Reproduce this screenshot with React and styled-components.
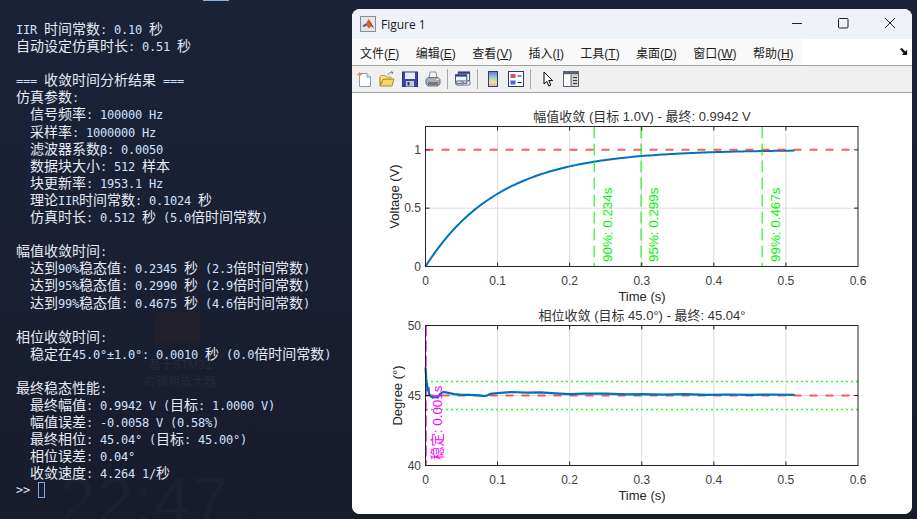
import React from 'react';
import styled, { createGlobalStyle } from 'styled-components';

const sansFont = '"Liberation Sans", "Noto Sans CJK SC", sans-serif';
const monoFont = '"DejaVu Sans Mono", "Noto Sans CJK SC", monospace';
const axisColor = '#262626';

const GlobalStyle = createGlobalStyle`
  html, body {
    margin: 0;
    padding: 0;
    background: #1a1f30;
  }
`;

const Desktop = styled.div`
  position: relative;
  display: flex;
  width: 917px;
  height: 519px;
  overflow: hidden;
  background: linear-gradient(180deg, #1b2236 0%, #1a2032 50%, #181b2a 100%);
`;

const TaskAccent = styled.div`
  position: absolute;
  top: 0;
  left: 203px;
  width: 26px;
  height: 1px;
  background: #7fb0f0;
`;

const WallpaperTile = styled.div`
  position: absolute;
  left: 155px;
  top: 313px;
  width: 45px;
  height: 30px;
  background: #22212b;
`;

const WallpaperCaption = styled.div`
  position: absolute;
  left: 143px;
  top: 357px;
  width: 74px;
  font-family: ${sansFont};
  font-size: 12px;
  line-height: 17px;
  text-align: center;
  color: #262a3a;
`;

const WallpaperClock = styled.div`
  position: absolute;
  left: 59px;
  top: 463px;
  font-family: ${sansFont};
  font-size: 66px;
  letter-spacing: 1px;
  line-height: 76px;
  color: #1c2031;
`;

const Terminal = styled.div`
  position: relative;
  flex: 0 0 352px;
  box-sizing: border-box;
  padding: 20px 0 0 16px;
  font-family: ${monoFont};
  font-size: 12px;
  letter-spacing: -0.22px;
  color: #cfe0ff;
`;

const Line = styled.div`
  height: 17.1px;
  line-height: 17.1px;
  white-space: pre;
`;

const Han = styled.span`
  font-family: "Noto Sans CJK SC", sans-serif;
  font-size: 14px;
  letter-spacing: 0;
  color: #e6eaf4;
`;

const Caret = styled.span`
  display: inline-block;
  box-sizing: border-box;
  width: 7px;
  height: 16px;
  margin-left: 1px;
  vertical-align: -4px;
  border: 1px solid #7fa8e8;
`;

const Figure = styled.div`
  flex: 0 0 560px;
  display: flex;
  flex-direction: column;
  height: 505px;
  margin-top: 9px;
  overflow: hidden;
  border-radius: 8px;
  background: #fff;
`;

const TitleBar = styled.div`
  flex: 0 0 30px;
  display: flex;
  align-items: center;
  padding-left: 8px;
  background: #eff2f9;
`;

const AppIcon = styled.svg`
  width: 16px;
  height: 16px;
  margin-right: 5px;
`;

const WindowTitle = styled.div`
  flex: 1;
  font-family: "Open Sans", sans-serif;
  font-size: 12px;
  color: #1a1a1a;
`;

const WindowButton = styled.svg`
  width: 46px;
  height: 30px;
`;

const MenuBar = styled.div`
  flex: 0 0 27px;
  display: flex;
  box-sizing: border-box;
  border-bottom: 1px solid #a0a0a0;
  background: #fff;
`;

const MenuItems = styled.div`
  display: flex;
  align-items: center;
  gap: 16.4px;
  width: 450px;
  box-sizing: border-box;
  padding-left: 8px;
  background: #f9f9f9;
`;

const MenuItem = styled.span`
  font-family: ${sansFont};
  font-size: 12px;
  color: #1c1c1c;
  white-space: nowrap;

  u {
    text-underline-offset: 1px;
  }
`;

const DockArrow = styled.svg`
  width: 8px;
  height: 8px;
  margin: 9px 4px 0 auto;
`;

const Toolbar = styled.div`
  flex: 0 0 27px;
  display: flex;
  align-items: center;
  box-sizing: border-box;
  border-bottom: 1px solid #a0a0a0;
  background: #f0f0f0;
`;

const ToolButton = styled.div`
  display: flex;
  justify-content: center;
  width: 23px;
`;

const ToolIcon = styled.svg`
  display: block;
  width: 16px;
  height: 16px;
`;

const ToolSep = styled.div`
  width: 1px;
  height: 20px;
  margin: 0 ${p => p.$right || 3}px 0 3px;
  background: #a6a6a6;
`;

const Canvas = styled.div`
  flex: 1;
  display: flex;
  flex-direction: column;
  padding-top: 10px;
  background: #fff;
`;

const PlotSvg = styled.svg`
  display: block;
  width: 560px;
  flex: none;
`;

const TickLabel = styled.text`
  font-family: ${sansFont};
  font-size: 12px;
  fill: #404040;
`;

const AxisLabel = styled.text`
  font-family: ${sansFont};
  font-size: 13px;
  fill: #262626;
  text-anchor: middle;
`;

const PlotTitle = styled.text`
  font-family: ${sansFont};
  font-size: 13px;
  fill: #333;
  text-anchor: middle;
`;

const Note = styled.text`
  font-family: ${sansFont};
  font-size: 13.4px;
  fill: ${p => p.$color};
`;

const LINES = [
  'IIR 时间常数: 0.10 秒',
  '自动设定仿真时长: 0.51 秒',
  '',
  '=== 收敛时间分析结果 ===',
  '仿真参数:',
  '  信号频率: 100000 Hz',
  '  采样率: 1000000 Hz',
  '  滤波器系数β: 0.0050',
  '  数据块大小: 512 样本',
  '  块更新率: 1953.1 Hz',
  '  理论IIR时间常数: 0.1024 秒',
  '  仿真时长: 0.512 秒 (5.0倍时间常数)',
  '',
  '幅值收敛时间:',
  '  达到90%稳态值: 0.2345 秒 (2.3倍时间常数)',
  '  达到95%稳态值: 0.2990 秒 (2.9倍时间常数)',
  '  达到99%稳态值: 0.4675 秒 (4.6倍时间常数)',
  '',
  '相位收敛时间:',
  '  稳定在45.0°±1.0°: 0.0010 秒 (0.0倍时间常数)',
  '',
  '最终稳态性能:',
  '  最终幅值: 0.9942 V (目标: 1.0000 V)',
  '  幅值误差: -0.0058 V (0.58%)',
  '  最终相位: 45.04° (目标: 45.00°)',
  '  相位误差: 0.04°',
  '  收敛速度: 4.264 1/秒',
];

const MENUS = [
  ['文件', 'F'],
  ['编辑', 'E'],
  ['查看', 'V'],
  ['插入', 'I'],
  ['工具', 'T'],
  ['桌面', 'D'],
  ['窗口', 'W'],
  ['帮助', 'H'],
];

const renderLine = text =>
  text.split(/([\u3000-\u9fff]+)/).map((part, i) =>
    i % 2 ? <Han key={i}>{part}</Han> : part
  );

// plot area in page coordinates
const LEFT = 425.5;
const RIGHT = 858;
const xPos = t => LEFT + (t / 0.6) * (RIGHT - LEFT);
const XTICKS = [0, 0.1, 0.2, 0.3, 0.4, 0.5, 0.6];

function toPoints(data, yPos) {
  return data.map(([t, v]) => `${xPos(t).toFixed(2)},${yPos(v).toFixed(2)}`).join(' ');
}

function Axes({ top, bottom, yTicks, yPos, yName, yNameX, title, children }) {
  const midY = (top + bottom) / 2;
  return (
    <>
      {XTICKS.slice(1, -1).map(t => (
        <line key={t} x1={xPos(t)} x2={xPos(t)} y1={top} y2={bottom} stroke="#dcdcdc" />
      ))}
      {yTicks.slice(1, -1).map(v => (
        <line key={v} x1={LEFT} x2={RIGHT} y1={yPos(v)} y2={yPos(v)} stroke="#dcdcdc" />
      ))}
      {children}
      <rect x={LEFT} y={top} width={RIGHT - LEFT} height={bottom - top} fill="none" stroke={axisColor} />
      {XTICKS.slice(1, -1).map(t => (
        <React.Fragment key={t}>
          <line x1={xPos(t)} x2={xPos(t)} y1={top} y2={top + 4} stroke={axisColor} />
          <line x1={xPos(t)} x2={xPos(t)} y1={bottom} y2={bottom - 4} stroke={axisColor} />
        </React.Fragment>
      ))}
      {yTicks.map(v => (
        <React.Fragment key={v}>
          <line x1={LEFT} x2={LEFT + 4} y1={yPos(v)} y2={yPos(v)} stroke={axisColor} />
          <line x1={RIGHT} x2={RIGHT - 4} y1={yPos(v)} y2={yPos(v)} stroke={axisColor} />
          <TickLabel x={421} y={yPos(v) + 4} textAnchor="end">{v}</TickLabel>
        </React.Fragment>
      ))}
      {XTICKS.map(t => (
        <TickLabel key={t} x={xPos(t)} y={bottom + 18} textAnchor="middle">{t}</TickLabel>
      ))}
      <AxisLabel x={642} y={bottom + 34}>Time (s)</AxisLabel>
      <AxisLabel transform={`translate(${yNameX} ${midY}) rotate(-90)`}>{yName}</AxisLabel>
      <PlotTitle x={642} y={top - 6}>{title}</PlotTitle>
    </>
  );
}

function AmplitudePlot() {
  const top = 126.5;
  const bottom = 266.5;
  const yPos = v => bottom - (v / 1.2) * (bottom - top);
  const curve = [];
  for (let t = 0; t <= 0.508; t += 0.004) curve.push([t, 1 - Math.exp(-t / 0.1024)]);
  curve.push([0.512, 0.9942]);
  const marks = [
    [0.234, '90%: 0.234s', 612],
    [0.299, '95%: 0.299s', 658],
    [0.467, '99%: 0.467s', 780],
  ];
  return (
    <PlotSvg viewBox="352 103 560 203" height="203">
      <Axes
        top={top}
        bottom={bottom}
        yPos={yPos}
        yTicks={[0, 0.5, 1]}
        yName="Voltage (V)"
        yNameX={399}
        title="幅值收敛 (目标 1.0V) - 最终: 0.9942 V"
      >
        <polyline points={toPoints(curve, yPos)} fill="none" stroke="#0072bd" strokeWidth="2" />
        <line x1={LEFT} x2={RIGHT} y1={yPos(1)} y2={yPos(1)} stroke="#ff3030" strokeOpacity="0.8" strokeWidth="2" strokeDasharray="8 8" />
        {marks.map(([t, label, textX]) => (
          <React.Fragment key={label}>
            <line x1={xPos(t)} x2={xPos(t)} y1={top} y2={bottom} stroke="#00f000" strokeDasharray="12 5" />
            <Note $color="#00f400" transform={`translate(${textX} 262) rotate(-90)`}>{label}</Note>
          </React.Fragment>
        ))}
      </Axes>
    </PlotSvg>
  );
}

function PhasePlot() {
  const top = 325.5;
  const bottom = 465.5;
  const yPos = v => bottom - ((v - 40) / 10) * (bottom - top);
  const curve = [
    [0, 47], [0.0008, 46.4], [0.0015, 45.6], [0.002, 45.9], [0.003, 45.3], [0.004, 45.6], [0.005, 45.1], [0.007, 44.95],
    [0.01, 44.85], [0.013, 44.9], [0.017, 44.85], [0.02, 45.1], [0.025, 45.25], [0.03, 45.2], [0.04, 45.1], [0.05, 45.05],
    [0.06, 45.05], [0.07, 45.03], [0.08, 44.97], [0.085, 44.98], [0.09, 45.12], [0.1, 45.17], [0.12, 45.25], [0.14, 45.2],
    [0.16, 45.22], [0.18, 45.15], [0.2, 45.1], [0.22, 45.13], [0.25, 45.14], [0.28, 45.08], [0.3, 45.1], [0.33, 45.06],
    [0.36, 45.1], [0.39, 45.05], [0.42, 45.07], [0.45, 45.04], [0.48, 45.07], [0.512, 45.04],
  ];
  return (
    <PlotSvg viewBox="352 306 560 198" height="198">
      <Axes
        top={top}
        bottom={bottom}
        yPos={yPos}
        yTicks={[40, 45, 50]}
        yName="Degree (°)"
        yNameX={402}
        title="相位收敛 (目标 45.0°) - 最终: 45.04°"
      >
        {[44, 46].map(v => (
          <line key={v} x1={426} x2={RIGHT} y1={yPos(v)} y2={yPos(v)} stroke="#20ff20" strokeWidth="1.5" strokeDasharray="2 3" />
        ))}
        <line x1={xPos(0.001)} x2={xPos(0.001)} y1={top} y2={bottom} stroke="#ff00ff" strokeDasharray="11 4" />
        <line x1={LEFT} x2={RIGHT} y1={yPos(45)} y2={yPos(45)} stroke="#ff3030" strokeOpacity="0.8" strokeWidth="2" strokeDasharray="8 8" />
        <polyline points={toPoints(curve, yPos)} fill="none" stroke="#0072bd" strokeWidth="2.2" />
        <Note $color="#ff00ff" transform="translate(442 460) rotate(-90)">稳定: 0.001s</Note>
      </Axes>
    </PlotSvg>
  );
}

const MatlabIcon = () => (
  <AppIcon viewBox="0 0 16 16">
    <rect x="0.5" y="0.5" width="15" height="15" fill="#e4e6ea" stroke="#8a8d96" />
    <path d="M2 10 L6 7.5 L8.5 3 L11 7 L14 12 L11 10.5 L9 12.5 L6.5 9.5 Z" fill="#d9622b" />
    <path d="M2 10 L6 7.5 L7 8.5 L5 11 Z" fill="#2f6fb0" />
    <path d="M8.5 3 L11 7 L14 12 L11.5 10 L9.5 6 Z" fill="#b03a1a" />
  </AppIcon>
);

const NewIcon = () => (
  <ToolIcon viewBox="0 0 16 16">
    <path d="M3.5 2.5 H11 L14.5 6 V15.5 H3.5 Z" fill="#fbfdff" stroke="#7d9cc0" />
    <path d="M11 2.5 V6 H14.5" fill="#dfe9f5" stroke="#7d9cc0" />
    <path d="M3.5 0.5 L4.3 2.5 L6.5 3.5 L4.3 4.5 L3.5 6.5 L2.7 4.5 L0.5 3.5 L2.7 2.5 Z" fill="#f08a3c" />
  </ToolIcon>
);

const OpenIcon = () => (
  <ToolIcon viewBox="0 0 16 16">
    <path d="M1 6 V15 H13 L15 8 H4 L2.5 13" fill="#f6d75f" stroke="#a88a2a" />
    <path d="M1 6 L2 4.5 H6 L7 6 H12 V8 H4 L1.5 14 Z" fill="#fbe68c" stroke="#a88a2a" strokeWidth="0.8" />
    <path d="M9 4 C10 1.5 12 1 14 1.5 M14 1.5 L12 0.5 M14 1.5 L12.6 3.2" fill="none" stroke="#6f7f8f" />
  </ToolIcon>
);

const SaveIcon = () => (
  <ToolIcon viewBox="0 0 16 16">
    <rect x="0.5" y="1" width="15" height="15" fill="#3d43a8" stroke="#2a2e80" />
    <rect x="3" y="1.5" width="10" height="6.5" fill="#e8ecf8" />
    <rect x="4" y="10" width="8" height="5.5" fill="#c8ccd8" />
    <rect x="5.5" y="11" width="2" height="3.5" fill="#2a2e60" />
  </ToolIcon>
);

const PrintIcon = () => (
  <ToolIcon viewBox="0 0 16 16">
    <path d="M4 7 L5 1 H11 L12 7 Z" fill="#f4f6f8" stroke="#8a9098" />
    <path d="M1 8.5 L3 6.5 H13 L15 8.5 V13 L13 15 H3 L1 13 Z" fill="#a9aeb4" stroke="#6c7278" />
    <rect x="3" y="11" width="10" height="3" fill="#71767c" />
    <rect x="11.5" y="8" width="2" height="1" fill="#f2f2f2" />
  </ToolIcon>
);

const LinkIcon = () => (
  <ToolIcon viewBox="0 0 17 16">
    <rect x="3.5" y="0.5" width="12" height="9" fill="#f1f4f8" stroke="#32457a" />
    <rect x="3.5" y="0.5" width="12" height="2" fill="#32457a" />
    <rect x="0.5" y="3.5" width="12" height="9" fill="#f1f4f8" stroke="#32457a" />
    <rect x="0.5" y="3.5" width="12" height="2" fill="#32457a" />
    <rect x="1" y="10" width="8" height="4.5" rx="2.2" fill="none" stroke="#77818f" strokeWidth="1.5" />
    <rect x="7" y="10" width="9" height="4.5" rx="2.2" fill="none" stroke="#8d97a5" strokeWidth="1.5" />
  </ToolIcon>
);

const ColorbarIcon = () => (
  <ToolIcon viewBox="0 0 16 16">
    <defs>
      <linearGradient id="colorbarFill" x1="0" y1="0" x2="0" y2="1">
        <stop offset="0" stopColor="#5a78c8" />
        <stop offset="0.4" stopColor="#9fd0c8" />
        <stop offset="0.7" stopColor="#e6e6a0" />
        <stop offset="1" stopColor="#e6a8c0" />
      </linearGradient>
    </defs>
    <rect x="3.5" y="0.5" width="9" height="15" fill="url(#colorbarFill)" stroke="#2f3d66" />
  </ToolIcon>
);

const LegendIcon = () => (
  <ToolIcon viewBox="0 0 16 16">
    <rect x="0.5" y="0.5" width="15" height="15" fill="#fbfbfd" stroke="#2f3d66" />
    <rect x="2.5" y="3" width="5" height="4" fill="#e0505a" />
    <rect x="2.5" y="9.5" width="5" height="4" fill="#5060d8" />
    <rect x="9.5" y="4.5" width="4" height="1" fill="#222" />
    <rect x="9.5" y="11" width="4" height="1" fill="#222" />
  </ToolIcon>
);

const CursorIcon = () => (
  <ToolIcon viewBox="0 0 16 16">
    <path d="M4 1 V13 L6.8 10.5 L8.8 15 L10.8 14 L8.8 9.6 H12.5 Z" fill="#fff" stroke="#000" strokeLinejoin="round" />
  </ToolIcon>
);

const PlotToolsIcon = () => (
  <ToolIcon viewBox="0 0 16 16">
    <rect x="0.5" y="0.5" width="15" height="15" fill="#f4f4f4" stroke="#59626e" />
    <rect x="1" y="1" width="14" height="2.5" fill="#59626e" />
    <rect x="1" y="3.5" width="7" height="11.5" fill="#fff" />
    <rect x="8" y="3.5" width="7" height="11.5" fill="#d0d3d6" />
    <path d="M8 3.5 V15" stroke="#59626e" />
    <path d="M10 6.5 H14 M10 9.5 H14 M10 12.5 H14" stroke="#333" />
  </ToolIcon>
);

export default function App() {
  return (
    <>
      <GlobalStyle />
      <Desktop>
        <TaskAccent />
        <WallpaperTile />
        <WallpaperCaption>基于STM32 的锁相放大器</WallpaperCaption>
        <WallpaperClock>22:47</WallpaperClock>
        <Terminal>
          {LINES.map((text, i) => (
            <Line key={i}>{renderLine(text)}</Line>
          ))}
          <Line>{'>> '}<Caret /></Line>
        </Terminal>
        <Figure>
          <TitleBar>
            <MatlabIcon />
            <WindowTitle>Figure 1</WindowTitle>
            <WindowButton viewBox="0 0 46 30">
              <path d="M18 14.5 H28" stroke="#222" />
            </WindowButton>
            <WindowButton viewBox="0 0 46 30">
              <rect x="18.5" y="9.5" width="9.5" height="9.5" rx="1" fill="none" stroke="#222" />
            </WindowButton>
            <WindowButton viewBox="0 0 46 30">
              <path d="M19 9 L29 19 M29 9 L19 19" stroke="#222" />
            </WindowButton>
          </TitleBar>
          <MenuBar>
            <MenuItems>
              {MENUS.map(([name, key]) => (
                <MenuItem key={key}>{name}(<u>{key}</u>)</MenuItem>
              ))}
            </MenuItems>
            <DockArrow viewBox="0 0 9 9">
              <path d="M0 1 L2 0 L6 4 L8 2 V8 H2 L4 6 Z" fill="#111" />
            </DockArrow>
          </MenuBar>
          <Toolbar>
            <ToolButton><NewIcon /></ToolButton>
            <ToolButton><OpenIcon /></ToolButton>
            <ToolButton><SaveIcon /></ToolButton>
            <ToolButton><PrintIcon /></ToolButton>
            <ToolSep />
            <ToolButton><LinkIcon /></ToolButton>
            <ToolSep />
            <ToolButton><ColorbarIcon /></ToolButton>
            <ToolButton><LegendIcon /></ToolButton>
            <ToolSep $right={5} />
            <ToolButton><CursorIcon /></ToolButton>
            <ToolButton><PlotToolsIcon /></ToolButton>
          </Toolbar>
          <Canvas>
            <AmplitudePlot />
            <PhasePlot />
          </Canvas>
        </Figure>
      </Desktop>
    </>
  );
}
